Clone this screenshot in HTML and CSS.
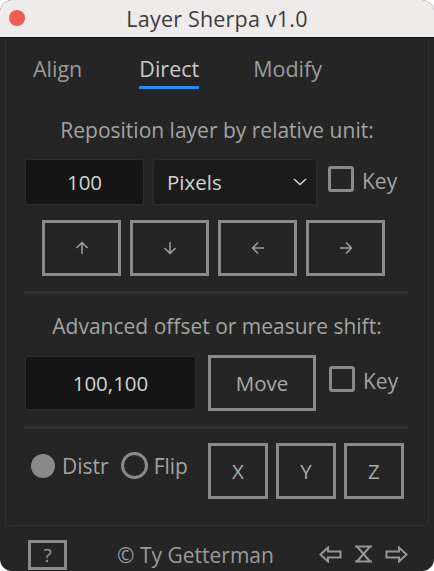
FILE: index.html
```html
<!DOCTYPE html>
<html lang="en">
<head>
    <meta charset="UTF-8">
    <meta name="viewport" content="width=device-width, initial-scale=1.0">
    <title>Layer Sherpa v1.0</title>
    <link rel="stylesheet" href="styles.css">
</head>
<body>
    <div class="window">
        <div class="titlebar">
            <span class="close-dot"></span>
            <span class="title">Layer Sherpa v1.0</span>
        </div>

        <div class="panel">
            <div class="tabs">
                <span class="tab">Align</span>
                <span class="tab active">Direct</span>
                <span class="tab">Modify</span>
            </div>

            <p class="heading first">Reposition layer by relative unit:</p>
            <div class="row unit-row">
                <div class="field unit-amount">100</div>
                <div class="field unit-select">
                    <span>Pixels</span>
                    <svg class="chevron" width="14" height="8" viewBox="0 0 14 8">
                        <path d="M1 1 L7 6.5 L13 1" fill="none" stroke="#d0d0d0" stroke-width="1.6"/>
                    </svg>
                </div>
                <label class="check"><span class="box"></span><span class="check-text">Key</span></label>
            </div>

            <div class="row arrows">
                <button class="btn arrow-btn">
                    <svg width="14" height="14" viewBox="0 0 14 14"><path d="M7 13 V1.5 M1.5 7 L7 1.5 L12.5 7" fill="none" stroke="#a0a0a0" stroke-width="1.5"/></svg>
                </button>
                <button class="btn arrow-btn">
                    <svg width="14" height="14" viewBox="0 0 14 14"><path d="M7 1 V12.5 M1.5 7 L7 12.5 L12.5 7" fill="none" stroke="#a0a0a0" stroke-width="1.5"/></svg>
                </button>
                <button class="btn arrow-btn">
                    <svg width="14" height="14" viewBox="0 0 14 14"><path d="M13 7 H1.5 M7 1.5 L1.5 7 L7 12.5" fill="none" stroke="#a0a0a0" stroke-width="1.5"/></svg>
                </button>
                <button class="btn arrow-btn">
                    <svg width="14" height="14" viewBox="0 0 14 14"><path d="M1 7 H12.5 M7 1.5 L12.5 7 L7 12.5" fill="none" stroke="#a0a0a0" stroke-width="1.5"/></svg>
                </button>
            </div>

            <hr class="divider">

            <p class="heading">Advanced offset or measure shift:</p>
            <div class="row offset-row">
                <div class="field offset-amount">100,100</div>
                <button class="btn move-btn">Move</button>
                <label class="check"><span class="box"></span><span class="check-text">Key</span></label>
            </div>

            <hr class="divider">

            <div class="row axis-row">
                <label class="radio"><span class="dot filled"></span>Distr</label>
                <label class="radio"><span class="dot"></span>Flip</label>
                <div class="axis-btns">
                    <button class="btn axis-btn">X</button>
                    <button class="btn axis-btn">Y</button>
                    <button class="btn axis-btn">Z</button>
                </div>
            </div>
        </div>

        <div class="footer">
            <span class="help">?</span>
            <span class="credit">© Ty Getterman</span>
            <div class="footer-icons">
                <svg width="23" height="17" viewBox="0 0 23 17"><path d="M1.5 8.5 L9 1.5 V5.5 H21.5 V11.5 H9 V15.5 Z" fill="none" stroke="#959595" stroke-width="2" stroke-linejoin="miter"/></svg>
                <svg width="21" height="18" viewBox="0 0 21 18"><path d="M2 1.5 H19 M2 16.5 H19 M4 1.5 L17 16.5 M17 1.5 L4 16.5" fill="none" stroke="#959595" stroke-width="2"/></svg>
                <svg width="23" height="17" viewBox="0 0 23 17"><path d="M21.5 8.5 L14 1.5 V5.5 H1.5 V11.5 H14 V15.5 Z" fill="none" stroke="#959595" stroke-width="2" stroke-linejoin="miter"/></svg>
            </div>
        </div>
    </div>
</body>
</html>
```

FILE: styles.css
```css
body {
    margin: 0;
    background: #ffffff;
    font-family: "Open Sans", "Noto Sans", sans-serif;
}
.window {
    width: 434px;
    height: 571px;
    background: #252525;
    border-radius: 12px;
    overflow: hidden;
    display: flex;
    flex-direction: column;
}
.titlebar {
    height: 37px;
    background: #eeebea;
    border-bottom: 1px solid #111111;
    display: flex;
    align-items: center;
    justify-content: center;
    position: relative;
}
.close-dot {
    position: absolute;
    left: 9px;
    top: 10px;
    width: 16px;
    height: 16px;
    border-radius: 50%;
    background: #ee5c55;
}
.title {
    font-size: 21.5px;
    color: #3c3c3c;
    letter-spacing: 0.2px;
}
.panel {
    margin: 0 5px;
    height: 488px;
    border: 1px solid #303030;
    border-top: none;
    border-radius: 0 0 4px 4px;
    box-sizing: border-box;
}
.tabs {
    display: flex;
    gap: 57px;
    padding: 17px 0 0 27px;
}
.tab {
    font-size: 21.5px;
    line-height: 27px;
    color: #9b9b9b;
    padding-bottom: 4px;
    border-bottom: 3px solid transparent;
}
.tab.active {
    color: #c9c9c9;
    border-bottom-color: #2d8cea;
}
.tab.active + .tab {
    margin-left: -3px;
}
.heading {
    margin: 0;
    text-align: center;
    font-size: 21px;
    line-height: 26px;
    color: #a3a3a3;
    padding-top: 19px;
}
.heading.first {
    padding-top: 28px;
}
.row {
    display: flex;
    align-items: center;
}
.field {
    background: #151515;
    border: 1px solid #2d2d2d;
    border-radius: 3px;
    box-sizing: border-box;
    color: #d2d2d2;
    font-size: 20.5px;
    display: flex;
    align-items: center;
}
.unit-row {
    margin-top: 16px;
    padding-left: 19px;
    align-items: flex-start;
}
.unit-amount {
    width: 119px;
    height: 46px;
    justify-content: center;
}
.unit-select {
    width: 164px;
    height: 46px;
    margin-left: 9px;
    background: #1b1b1b;
    padding: 0 9px 0 13px;
    justify-content: space-between;
}
.check {
    display: flex;
    align-items: center;
    font-size: 21px;
    color: #a3a3a3;
    gap: 8px;
    margin-left: 11px;
    margin-top: 3px;
}
.check-text {
    padding-top: 5px;
}
.box {
    width: 26px;
    height: 26px;
    border: 3px solid #8a8a8a;
    border-radius: 3px;
    box-sizing: border-box;
}
.btn {
    background: transparent;
    border: 3px solid #8a8a8a;
    box-sizing: border-box;
    color: #aaaaaa;
    font-family: inherit;
    font-size: 20.5px;
    padding: 0;
    display: flex;
    align-items: center;
    justify-content: center;
}
.arrows {
    margin-top: 15px;
    padding-left: 36px;
    gap: 9px;
}
.arrow-btn {
    width: 79px;
    height: 56px;
}
.divider {
    margin: 15px 20px 0 18px;
    border: none;
    height: 3px;
    background: #313131;
}
.offset-row {
    margin-top: 17px;
    padding-left: 19px;
    align-items: flex-start;
}
.offset-amount {
    width: 171px;
    height: 54px;
    justify-content: center;
}
.move-btn {
    width: 108px;
    height: 56px;
    margin-left: 12px;
    margin-top: -1px;
}
.offset-row .check {
    margin-left: 13px;
    margin-top: 6px;
}
.axis-row {
    margin-top: 14px;
    padding-left: 25px;
}
.radio {
    display: flex;
    align-items: center;
    font-size: 21px;
    color: #a3a3a3;
    gap: 7px;
    margin-right: 12px;
    margin-top: -11px;
}
.radio + .radio {
    margin-right: 0;
    gap: 6px;
}
.dot {
    width: 27px;
    height: 27px;
    border: 3px solid #8a8a8a;
    border-radius: 50%;
    box-sizing: border-box;
}
.dot.filled {
    width: 24px;
    height: 24px;
    background: #8a8a8a;
    border: none;
}
.axis-btns {
    display: flex;
    gap: 8px;
    margin-left: 20px;
}
.axis-btn {
    width: 60px;
    height: 56px;
}
.footer {
    flex: 1;
    display: flex;
    align-items: flex-end;
    padding: 0 26px 1px 28px;
}
.help {
    width: 39px;
    height: 30px;
    box-sizing: border-box;
    border: 3px solid #8a8a8a;
    display: flex;
    align-items: center;
    justify-content: center;
    color: #9a9a9a;
    font-size: 19px;
}
.credit {
    margin-left: 50px;
    margin-bottom: 0;
    font-size: 21px;
    color: #9b9b9b;
    line-height: 30px;
}
.footer-icons {
    margin-left: auto;
    display: flex;
    gap: 11px;
    align-items: center;
    margin-bottom: 7px;
}
```
